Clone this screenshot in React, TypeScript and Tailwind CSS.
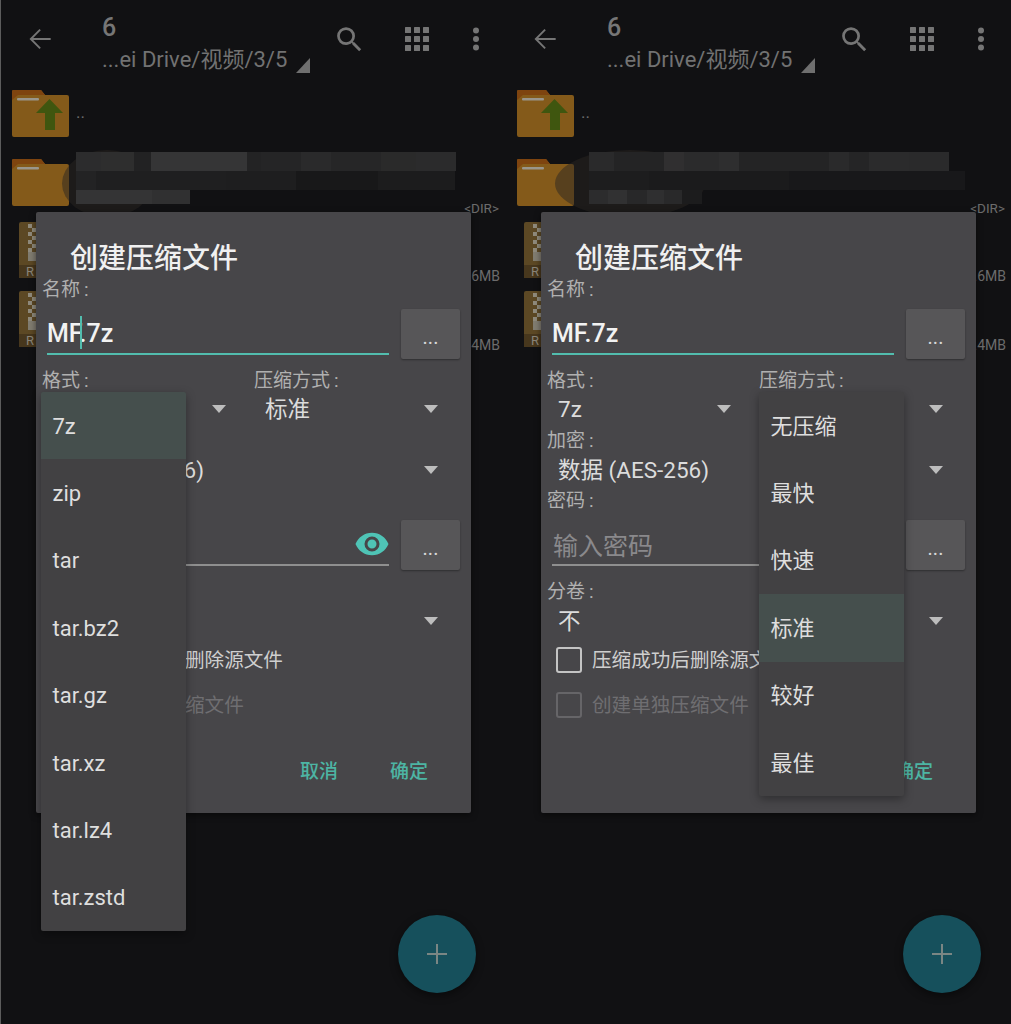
import React from "react";

const font = "font-['Roboto','Noto_Sans_CJK_SC',sans-serif]";

function Back() {
  return (
    <svg viewBox="0 0 24 24" className="w-[32px] h-[32px] fill-[#757575]">
      <path d="M20 11.2H6.9l5.7-5.7L11.6 4.5 4.1 12l7.5 7.5 1-1-5.7-5.7H20z" />
    </svg>
  );
}
function Search() {
  return (
    <svg viewBox="0 0 24 24" className="w-[33px] h-[33px] fill-[#757575]">
      <path d="M15.5 14h-.79l-.28-.27A6.47 6.47 0 0 0 16 9.5 6.5 6.5 0 1 0 9.5 16c1.61 0 3.09-.59 4.23-1.57l.27.28v.79l5 4.99L20.49 19l-4.99-5zm-6 0C7.01 14 5 11.99 5 9.5S7.01 5 9.5 5 14 7.01 14 9.5 11.99 14 9.5 14z" />
    </svg>
  );
}
function Grid() {
  const c = [0, 9, 18];
  return (
    <svg viewBox="0 0 24 24" className="w-[24px] h-[24px] fill-[#757575]">
      {c.map((y) => c.map((x) => <rect key={`${x}-${y}`} x={x} y={y} width="6" height="6" rx="0.5" />))}
    </svg>
  );
}
function Dots() {
  return (
    <svg viewBox="0 0 8 24" className="w-[8px] h-[24px] fill-[#757575]">
      <circle cx="4" cy="3.5" r="3" />
      <circle cx="4" cy="12" r="3" />
      <circle cx="4" cy="20.5" r="3" />
    </svg>
  );
}
function Corner() {
  return (
    <svg viewBox="0 0 14 15" className="w-[14px] h-[15px] fill-[#6f6f6f]">
      <path d="M14 0v15H0z" />
    </svg>
  );
}
function Folder({ up }: { up?: boolean }) {
  return (
    <svg viewBox="0 0 57 47" className="w-[57px] h-[47px] shrink-0">
      <path d="M1 0h28l4 5h22a2 2 0 0 1 2 2v38a2 2 0 0 1-2 2H2a2 2 0 0 1-2-2V1z" fill="#845a1a" />
      <path d="M1 0h28l4 5H6L0 10V1z" fill="#7e440f" />
      <rect x="5" y="8" width="22" height="2.5" rx="1" fill="#9a968c" />
      {up && <path d="M37.5 9 51 23h-8v17h-10V23h-9z" fill="#3f560f" />}
    </svg>
  );
}
function ZipIcon() {
  return (
    <svg viewBox="0 0 34 56" className="w-[34px] h-[56px] shrink-0">
      <rect x="0" y="0" width="34" height="56" rx="2" fill="#5c4824" />
      <rect x="0" y="43" width="34" height="13" fill="#47371d" />
      {[2, 10, 18, 26].map((y) => (
        <g key={y}>
          <rect x="9" y={y} width="4" height="4" fill="#8f8a7c" />
          <rect x="13" y={y + 4} width="4" height="4" fill="#8f8a7c" />
        </g>
      ))}
      <rect x="9" y="30" width="8" height="9" fill="#807c70" />
      <text x="7" y="54" fontSize="13" fill="#8a8478" fontFamily="Roboto">R</text>
    </svg>
  );
}
function Eye() {
  return (
    <svg viewBox="0 0 24 24" className="w-[36px] h-[36px] fill-[#4fc4b6]">
      <path d="M12 4.5C7 4.5 2.73 7.61 1 12c1.73 4.39 6 7.5 11 7.5s9.27-3.11 11-7.5c-1.73-4.39-6-7.5-11-7.5zM12 17a5 5 0 1 1 0-10 5 5 0 0 1 0 10zm0-8a3 3 0 1 0 0 6 3 3 0 0 0 0-6z" />
    </svg>
  );
}
function Caret() {
  return (
    <svg viewBox="0 0 14 8" className="w-[14px] h-[8px] fill-[#bdbdbd]">
      <path d="M0 0h14L7 8z" />
    </svg>
  );
}
function DotsBtn() {
  return (
    <div className="w-[59px] h-[50px] shrink-0 ml-[12px] bg-[#575658] rounded-[2px] shadow-[0_1px_2px_rgba(0,0,0,0.35)] flex items-center justify-center pt-[6px] text-[20px] leading-none text-[#d8d8d8]">
      ...
    </div>
  );
}
function Label({ text, className = "" }: { text: string; className?: string }) {
  return (
    <div className={`h-[18px] flex items-center text-[19px] leading-none text-[#b0b0b0] whitespace-nowrap ${className}`}>
      {text}
      <span className="ml-[4px]">:</span>
    </div>
  );
}
function Select({ text, w, h, mr }: { text: string; w: string; h: string; mr: string }) {
  return (
    <div className={`${w} ${h} flex items-center pl-[11px] text-[22.5px] leading-none text-[#dcdcdc]`}>
      <span className="flex-1 whitespace-nowrap">{text}</span>
      <span className={`${mr} mb-[1px] flex`}><Caret /></span>
    </div>
  );
}
function Check({ text, off }: { text: string; off?: boolean }) {
  return (
    <div className="h-[36px] flex items-center pl-[9px]">
      <span className={`w-[26px] h-[26px] rounded-[3px] border-[2.5px] ${off ? "border-[#666568]" : "border-[#c4c4c4]"}`} />
      <span className={`ml-[10px] pt-[2px] text-[19.6px] leading-none whitespace-nowrap ${off ? "text-[#6f6e71]" : "text-[#cfcfcf]"}`}>{text}</span>
    </div>
  );
}

function Dialog({ cursor }: { cursor?: boolean }) {
  return (
    <div className="absolute left-[36px] top-[212px] w-[435px] h-[601px] bg-[#474649] rounded-[2px] shadow-[0_2px_6px_rgba(0,0,0,0.5)] pt-[22px] pl-[6px]">
      <div className="h-[46px] pl-[28px] pt-[4px] flex items-center text-[28px] leading-none font-medium text-[#f0f0f0]">创建压缩文件</div>
      <Label text="名称" />
      <div className="mt-[11px] h-[50px] flex">
        <div className="relative w-[342px] h-[46px] ml-[5px] border-b-[2.5px] border-[#52bdae] pt-[6px] flex items-center">
          <span className="text-[25px] leading-[36px] font-medium text-[#f2f2f2]">MF.7z</span>
          {cursor && <span className="absolute left-[33px] top-[7px] w-[2px] h-[33px] bg-[#52bdae]" />}
        </div>
        <DotsBtn />
      </div>
      <div className="mt-[12px] flex">
        <div className="w-[212px]">
          <Label text="格式" />
          <Select text="7z" w="w-[212px]" h="h-[40px]" mr="mr-[28px]" />
        </div>
        <div className="w-[217px]">
          <Label text="压缩方式" />
          <Select text="标准" w="w-[217px]" h="h-[40px]" mr="mr-[33px]" />
        </div>
      </div>
      <Label text="加密" className="mt-[2px]" />
      <Select text="数据 (AES-256)" w="w-[429px]" h="h-[42px]" mr="mr-[33px]" />
      <Label text="密码" />
      <div className="mt-[11px] h-[50px] flex">
        <div className="relative w-[342px] h-[46px] ml-[5px] border-b-[2px] border-[#8f8f8f] pt-[8px] flex items-center">
          <span className="pl-[1px] text-[25px] leading-none text-[#8a898c]">输入密码</span>
          <span className="absolute right-[-1px] top-[6px] flex"><Eye /></span>
        </div>
        <DotsBtn />
      </div>
      <Label text="分卷" className="mt-[12px]" />
      <Select text="不" w="w-[429px]" h="h-[42px]" mr="mr-[33px]" />
      <Check text="压缩成功后删除源文件" />
      <div className="mt-[9px]">
        <Check text="创建单独压缩文件" off />
      </div>
      <div className="mt-[30px] h-[36px] flex items-center text-[19px] font-medium leading-none text-[#4db5a4]">
        <span className="ml-[258px]">取消</span>
        <span className="ml-[52px]">确定</span>
      </div>
    </div>
  );
}

function Menu({ items, active, pos }: { items: string[]; active: number; pos: string }) {
  return (
    <div className={`absolute top-[392px] ${pos} w-[145px] bg-[#424143] rounded-[2px] shadow-[0_3px_10px_rgba(0,0,0,0.35)] overflow-hidden`}>
      {items.map((t, i) => (
        <div key={t} className={`h-[67.4px] flex items-center pl-[11.5px] pt-[2px] text-[22px] leading-none text-[#dedede] ${i === active ? "bg-[#454f4d]" : ""}`}>
          {t}
        </div>
      ))}
    </div>
  );
}

type Block = [number, string];
function Smudge({ rows, oval }: { rows: { pl: number; h: number; blocks: Block[] }[]; oval: string }) {
  return (
    <>
      <div className={`absolute top-[150px] h-[67px] rounded-[50%] bg-[#2a2622]/50 ${oval}`} />
      <div className="absolute left-0 top-[152px] w-full">
        {rows.map((r, i) => (
          <div key={i} className="flex" style={{ paddingLeft: r.pl, height: r.h }}>
            {r.blocks.map(([w, c], j) => (
              <div key={j} style={{ width: w, background: c }} />
            ))}
          </div>
        ))}
      </div>
    </>
  );
}

const leftRows = [
  { pl: 76, h: 19, blocks: [[25, "#2c2c2d"], [33, "#2e2e2e"], [17, "#222223"], [96, "#353536"], [14, "#232324"], [40, "#252526"], [30, "#2a2a2b"], [50, "#262627"], [35, "#2a2a2a"], [40, "#2b2b2c"]] as Block[] },
  { pl: 76, h: 19, blocks: [[20, "#232324"], [130, "#1f1f20"], [70, "#1e1e1f"], [82, "#181819"], [77, "#1c1c1d"]] as Block[] },
  { pl: 76, h: 14, blocks: [[38, "#343435"], [38, "#343435"], [38, "#303031"]] as Block[] },
];
const rightRows = [
  { pl: 84, h: 19, blocks: [[25, "#2a2a2b"], [50, "#242425"], [20, "#302f30"], [35, "#2b2b2c"], [20, "#2e2e2f"], [90, "#242425"], [20, "#2a2a2b"], [20, "#252526"], [40, "#2b2b2c"], [40, "#2a2a2b"]] as Block[] },
  { pl: 84, h: 19, blocks: [[60, "#1d1d1e"], [140, "#1b1b1c"], [176, "#18181a"]] as Block[] },
  { pl: 84, h: 14, blocks: [[19, "#2c2c2d"], [19, "#313132"], [20, "#282829"], [17, "#2f2f30"], [18, "#29292a"], [20, "#1c1c1d"]] as Block[] },
];

function Screen({ wide, left }: { wide?: boolean; left?: boolean }) {
  return (
    <div className={`relative h-[1024px] shrink-0 overflow-hidden bg-[#111113] ${wide ? "w-[506px]" : "w-[505px] border-l border-[#5c5c5c]"}`}>
      <div className={left ? "ml-[-1px]" : ""}>
        <header className="h-[78px] flex items-center">
          <div className="ml-[24px] w-[78px] flex"><Back /></div>
          <div className="w-[232px] h-[78px]">
            <div className="pt-[15px] h-[48px] text-[25px] leading-[26px] font-medium text-[#767676]">6</div>
            <div className="text-[22px] leading-[24px] text-[#727272] whitespace-nowrap flex">
              ...ei Drive/视频/3/5
              <span className="ml-[9px] mt-[10px] flex"><Corner /></span>
            </div>
          </div>
          <div className="flex items-center w-[33px] ml-[-1px]"><Search /></div>
          <div className="ml-[39px] flex"><Grid /></div>
          <div className="ml-[43px] flex"><Dots /></div>
        </header>

        <div className="pl-[12px] pr-[5px] text-[#6c6c6c]">
          <div className="h-[75px] pt-[12px] flex">
            <Folder up />
            <span className="ml-[7px] mt-[14px] text-[17px] leading-none">..</span>
          </div>
          <div className="h-[63px] pt-[6px] flex">
            <Folder />
            <span className="ml-auto mr-[1px] self-end pb-[1px] text-[13.5px] leading-[14px]">&lt;DIR&gt;</span>
          </div>
          {["1.6MB", "1.4MB"].map((s) => (
            <div key={s} className="h-[69px] pt-[6px] pl-[7px] flex">
              <ZipIcon />
              <span className="ml-auto self-end text-[14px] leading-[18px]">{s}</span>
            </div>
          ))}
        </div>
      </div>

      <div className={`absolute top-0 h-full w-[505px] ${left ? "left-[-1px]" : "left-0"}`}>
        <Smudge rows={left ? leftRows : rightRows} oval={left ? "left-[62px] w-[90px]" : "left-[50px] w-[150px]"} />
        <Dialog cursor={left} />

        <div className="absolute left-[398px] top-[915px] w-[78px] h-[78px] rounded-full bg-[#16505c] shadow-[0_3px_8px_rgba(0,0,0,0.45)] flex items-center justify-center">
          <svg viewBox="0 0 20 20" className="w-[20px] h-[20px] stroke-[#7a8684] stroke-[2px]">
            <path d="M10 0v20M0 10h20" />
          </svg>
        </div>

        {left ? (
          <Menu pos="left-[41px]" active={0} items={["7z", "zip", "tar", "tar.bz2", "tar.gz", "tar.xz", "tar.lz4", "tar.zstd"]} />
        ) : (
          <Menu pos="left-[254px]" active={3} items={["无压缩", "最快", "快速", "标准", "较好", "最佳"]} />
        )}
      </div>
    </div>
  );
}

export default function App() {
  return (
    <div className={`flex w-[1011px] h-[1024px] overflow-hidden ${font}`}>
      <Screen left />
      <Screen wide />
    </div>
  );
}
